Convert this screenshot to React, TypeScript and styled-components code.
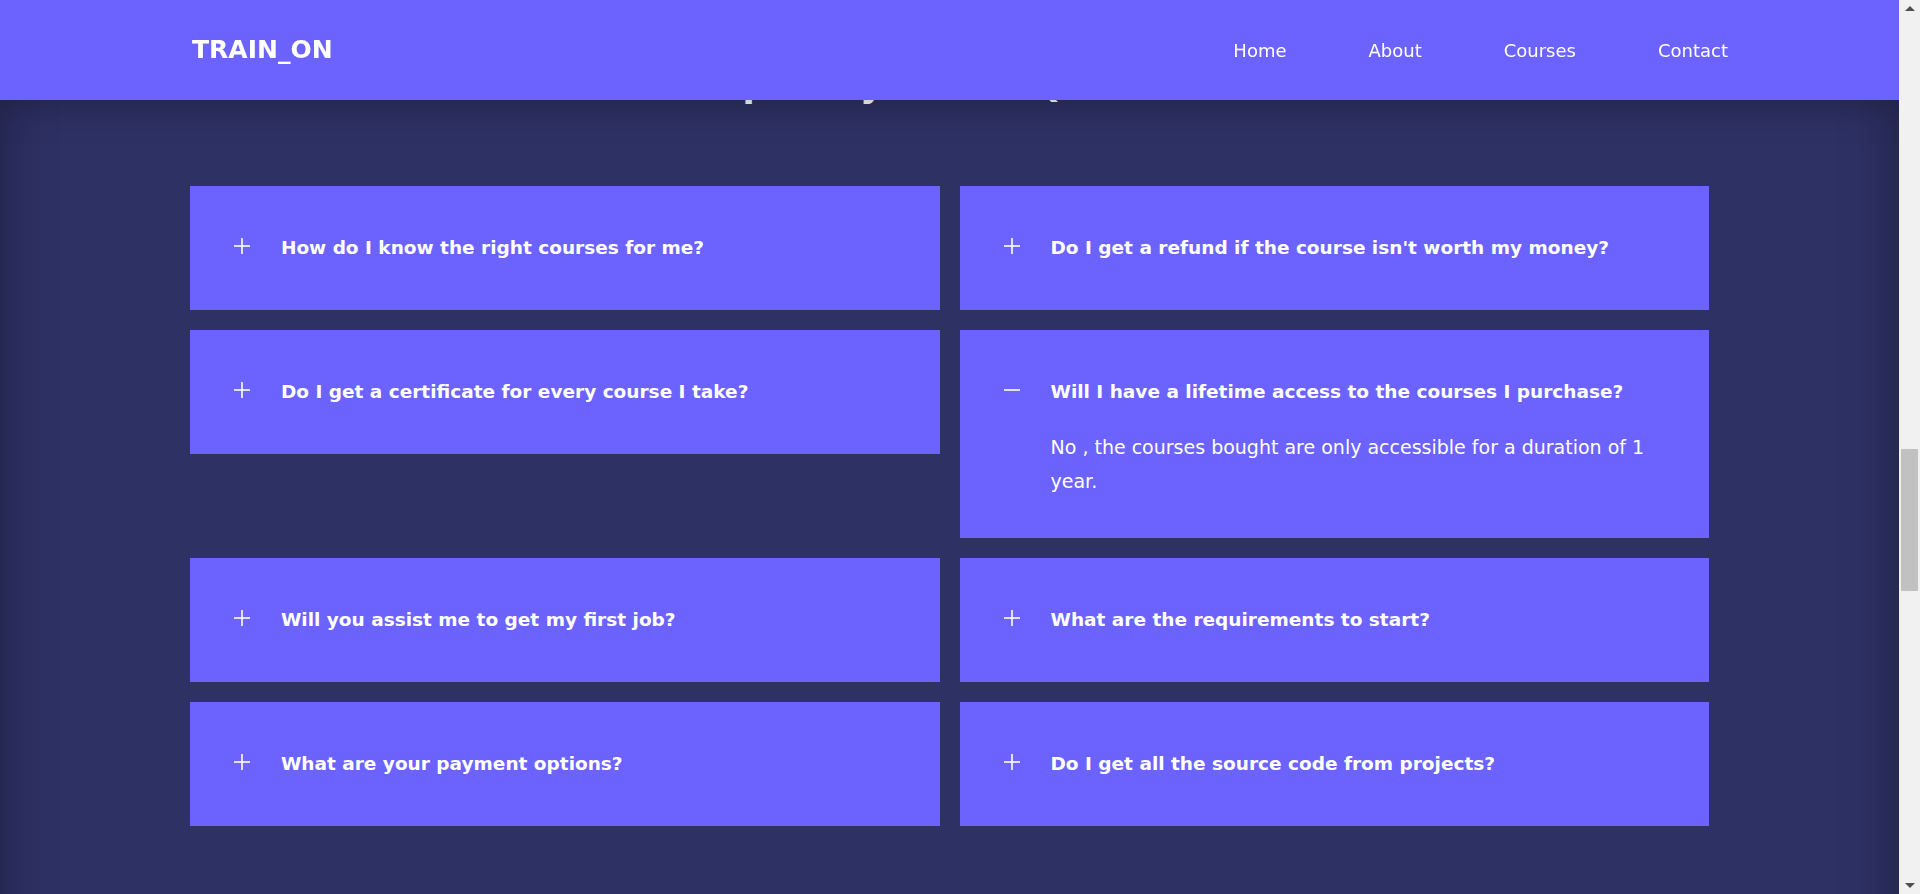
import React, { useEffect, useLayoutEffect, useState } from 'react';
import styled, { createGlobalStyle } from 'styled-components';

const BAR = 21;
const ARROW = 17;

const GlobalStyle = createGlobalStyle`
  html {
    scroll-behavior: auto;
    scrollbar-width: none;
  }
  html::-webkit-scrollbar {
    display: none;
  }
  body {
    margin: 0;
    background: #2e3164;
    font-family: "DejaVu Sans", Inter, sans-serif;
    color: #ffffff;
  }
  * {
    box-sizing: border-box;
  }
`;

const Page = styled.div`
  padding-right: ${BAR}px;
`;

const Header = styled.header`
  position: fixed;
  top: 0;
  left: 0;
  right: ${BAR}px;
  z-index: 10;
  height: 100px;
  padding: 0 171px 0 192px;
  display: flex;
  align-items: center;
  justify-content: space-between;
  background-color: #6c63ff;
  box-shadow: 0 0 40px rgba(0, 0, 0, 0.35);
`;

const Logo = styled.div`
  font-size: 25px;
  font-weight: 700;
  margin-top: -2px;
`;

const Nav = styled.nav`
  display: flex;
  gap: 82px;
`;

const NavLink = styled.a`
  color: #ffffff;
  text-decoration: none;
  font-size: 18px;
  font-weight: 400;
  cursor: pointer;
`;

// earlier / later parts of the page, scrolled out of view
const Placeholder = styled.div<{ $h: number }>`
  height: ${(p) => p.$h}px;
`;

const FaqSection = styled.section`
  padding: 263px 0 200px;
  box-shadow: inset 0 0 55px rgba(0, 0, 0, 0.35);
`;

const SectionTitle = styled.h2`
  margin: 0 0 79px;
  text-align: center;
  font-size: 36px;
  line-height: 44px;
  font-weight: 700;
`;

const FaqGrid = styled.div`
  width: 80%;
  margin: 0 auto;
  display: grid;
  grid-template-columns: 1fr 1fr;
  gap: 20px;
  align-items: start;
`;

const FaqCard = styled.div`
  background-color: #6c63ff;
  padding: 40px 44px;
  cursor: pointer;
`;

const QuestionRow = styled.div`
  display: flex;
  align-items: center;
  gap: 31px;
`;

const ToggleIcon = styled.svg`
  flex: 0 0 16px;
  width: 16px;
  height: 16px;
  margin-top: -4px;
`;

const Question = styled.h3`
  margin: 0;
  font-size: 18.5px;
  line-height: 44px;
  font-weight: 700;
`;

const Answer = styled.p`
  margin: 16px 0 0 47px;
  font-size: 19px;
  line-height: 34px;
  font-weight: 400;
`;

const ScrollTrack = styled.div`
  position: fixed;
  top: 0;
  right: 0;
  bottom: 0;
  width: ${BAR}px;
  background: #f1f1f1;
  z-index: 20;
`;

const ScrollArrow = styled.div<{ $down?: boolean }>`
  position: absolute;
  left: 0;
  right: 0;
  height: ${ARROW}px;
  ${(p) => (p.$down ? 'bottom: 0;' : 'top: 0;')}
  display: flex;
  align-items: center;
  justify-content: center;

  &::after {
    content: '';
    border-left: 5px solid transparent;
    border-right: 5px solid transparent;
    ${(p) => (p.$down ? 'border-top: 5px solid #505050;' : 'border-bottom: 5px solid #505050;')}
  }
`;

const ScrollThumb = styled.div`
  position: absolute;
  left: 2px;
  right: 2px;
  background: #c1c1c1;
`;

const faqs = [
  {
    q: 'How do I know the right courses for me?',
    a: 'Start with our beginner tracks, then pick courses based on the skills you want to build.',
  },
  {
    q: "Do I get a refund if the course isn't worth my money?",
    a: 'Yes, you can ask for a full refund within 14 days of your purchase.',
  },
  {
    q: 'Do I get a certificate for every course I take?',
    a: 'Yes, a certificate is issued once you complete all the lessons of a course.',
  },
  {
    q: 'Will I have a lifetime access to the courses I purchase?',
    a: 'No , the courses bought are only accessible for a duration of 1 year.',
  },
  {
    q: 'Will you assist me to get my first job?',
    a: 'We share job offers and help you prepare your portfolio and interviews.',
  },
  {
    q: 'What are the requirements to start?',
    a: 'Only a computer, an internet connection and the will to learn.',
  },
  {
    q: 'What are your payment options?',
    a: 'You can pay by card, PayPal or bank transfer.',
  },
  {
    q: 'Do I get all the source code from projects?',
    a: 'Yes, the source code of every project is available for download.',
  },
];

const Toggle: React.FC<{ open: boolean }> = ({ open }) => (
  <ToggleIcon viewBox="0 0 16 16" fill="none" stroke="#ffffff" strokeWidth={1.6}>
    <line x1="0" y1="8" x2="16" y2="8" />
    {!open && <line x1="8" y1="0" x2="8" y2="16" />}
  </ToggleIcon>
);

const Scrollbar: React.FC = () => {
  const [thumb, setThumb] = useState({ top: ARROW, height: 0 });

  useEffect(() => {
    const update = () => {
      const doc = document.documentElement.scrollHeight;
      const view = window.innerHeight;
      const track = view - ARROW * 2;
      setThumb({
        top: ARROW + (window.scrollY / doc) * track,
        height: (view / doc) * track,
      });
    };
    update();
    window.addEventListener('scroll', update);
    window.addEventListener('resize', update);
    return () => {
      window.removeEventListener('scroll', update);
      window.removeEventListener('resize', update);
    };
  }, []);

  return (
    <ScrollTrack>
      <ScrollArrow />
      <ScrollThumb style={{ top: thumb.top, height: thumb.height }} />
      <ScrollArrow $down />
    </ScrollTrack>
  );
};

const App: React.FC = () => {
  const [openIndex, setOpenIndex] = useState<number | null>(3);

  useLayoutEffect(() => {
    window.scrollTo(0, 2720);
  }, []);

  return (
    <Page>
      <GlobalStyle />
      <Header>
        <Logo>TRAIN_ON</Logo>
        <Nav>
          <NavLink>Home</NavLink>
          <NavLink>About</NavLink>
          <NavLink>Courses</NavLink>
          <NavLink>Contact</NavLink>
        </Nav>
      </Header>

      <Placeholder $h={2520} />

      <FaqSection>
        <SectionTitle>Frequently Asked Questions</SectionTitle>
        <FaqGrid>
          {faqs.map((item, i) => (
            <FaqCard key={item.q} onClick={() => setOpenIndex(openIndex === i ? null : i)}>
              <QuestionRow>
                <Toggle open={openIndex === i} />
                <Question>{item.q}</Question>
              </QuestionRow>
              {openIndex === i && <Answer>{item.a}</Answer>}
            </FaqCard>
          ))}
        </FaqGrid>
      </FaqSection>

      <Placeholder $h={1668} />
      <Scrollbar />
    </Page>
  );
};

export default App;
